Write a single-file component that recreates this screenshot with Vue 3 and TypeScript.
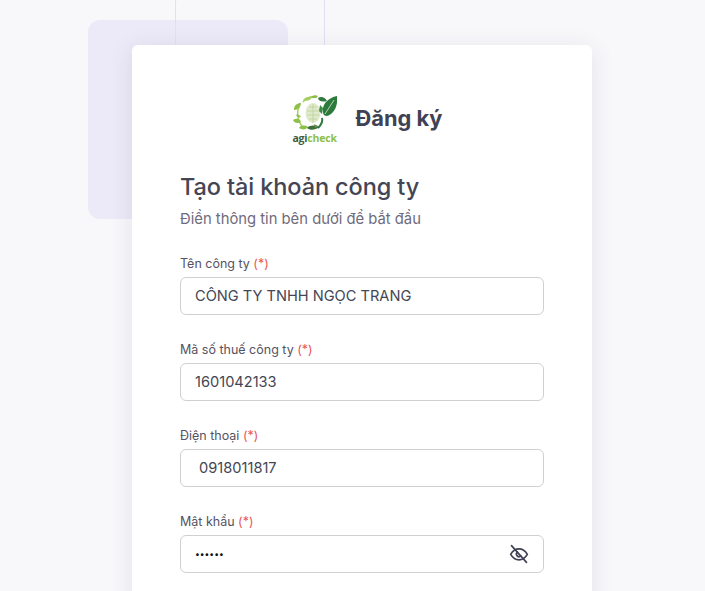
<script setup lang="ts">
interface Field { label: string; value: string; type?: string }
const fields: Field[] = [
  { label: 'Tên công ty', value: 'CÔNG TY TNHH NGỌC TRANG' },
  { label: 'Mã số thuế công ty', value: '1601042133' },
  { label: 'Điện thoại', value: ' 0918011817' },
  { label: 'Mật khẩu', value: '123456', type: 'password' },
]
</script>

<template>
  <div class="page">
    <div class="deco-square"></div>
    <div class="deco-lines"></div>
    <main class="card">
      <header class="brand">
        <div class="logo">
          <svg class="logo-art" width="44" height="38" viewBox="0 0 44 38">
            <ellipse cx="20" cy="18" rx="7.500" ry="10" fill="#dfe9cb" />
            <path d="M16 12h8M14 16h12M14 20h12M16 24h8M20 9v19" stroke="#bcd29b" stroke-width=".8" fill="none" />
            <path d="M10 7C13 3 18 1 24 2" stroke="#a5cf5c" stroke-width="1.500" fill="none" />
            <path d="M6 12C3 19 5 28 11 33" stroke="#a5cf5c" stroke-width="1.400" fill="none" />
            <path d="M1 15c0-5 3-7 7-7 0 4-3 7-7 7zM0 25c3-2 7-2 8 2-3 2-7 1-8-2zM6 33c2-3 6-3 9-1-2 3-6 3-9 1zM3 20c2-1 4 0 5 2-2 1-4 0-5-2z" fill="#8fc04a" />
            <path d="M10 5c2-3 6-4 9-3-1 3-5 5-9 3z" fill="#a5cf5c" />
            <path d="M18 2c2-2 5-2 7-1-1 2-5 3-7 1z" fill="#8cbc46" />
            <path d="M25 3c3-2 7-1 9 3-4 1-8 1-9-3z" fill="#2e7a3f" />
            <path d="M30 17C29 9 35 3 44 1c1 9-2 17-10 20-2 0-4-1-4-4z" fill="#2c7a3c" />
            <path d="M32 19L41 5" stroke="#d9ead3" stroke-width=".8" />
            <path d="M27 10l3 3-1 6-3-3z" fill="#3c8a48" />
            <path d="M29 23c1 3-1 7-4 10" stroke="#2e7a3f" stroke-width="2" fill="none" />
            <path d="M14 33c3-3 8-3 12-1-3 3-9 4-12 1z" fill="#3c6e3a" />
            <path d="M21 29l4 2-3 2z" fill="#6c8d5a" />
          </svg>
          <div class="logo-word"><span class="agi">agi</span><span class="check">check</span></div>
        </div>
        <span class="brand-title">Đăng ký</span>
      </header>

      <h1 class="title">Tạo tài khoản công ty</h1>
      <p class="subtitle">Điền thông tin bên dưới để bắt đầu</p>

      <form class="form" @submit.prevent>
        <div v-for="f in fields" :key="f.label" class="field">
          <label class="label">{{ f.label }} <span class="req">(*)</span></label>
          <div class="input-wrap">
            <input class="input" :class="{ pass: f.type === 'password' }" :type="f.type ?? 'text'" :value="f.value" />
            <svg v-if="f.type === 'password'" class="eye" width="20" height="20" viewBox="0 0 24 24" fill="none" stroke="#3f4254" stroke-width="2" stroke-linecap="round" stroke-linejoin="round">
              <path d="M2 12.500c2.600-4.400 6-6.600 10-6.600s7.400 2.200 10 6.600c-2.600 4.400-6 6.600-10 6.600S4.600 16.900 2 12.500z" />
              <path d="M10 9.800a3 3 0 0 0 4.200 4.600" />
              <path d="M3 2l18 20" />
            </svg>
          </div>
        </div>
      </form>
    </main>
  </div>
</template>

<style>
html, body { margin: 0; height: 100%; overflow: hidden; background: #f8f8fb; }
</style>

<style scoped>
.page {
  position: relative;
  height: 591px;
  overflow: hidden;
  background: #f8f8fb;
  font-family: Inter, "Noto Sans", sans-serif;
  color: #444654;
}
.deco-square {
  position: absolute;
  left: 88px;
  top: 20px;
  width: 200px;
  height: 199px;
  border-radius: 12px;
  background: #eceaf8;
}
.deco-lines {
  position: absolute;
  left: 175px;
  top: -8px;
  width: 150px;
  height: 200px;
  box-sizing: border-box;
  border: 1px solid #e1dff5;
  border-radius: 10px;
}
.card {
  position: relative;
  box-sizing: border-box;
  width: 460px;
  margin: 45px 0 0 132px;
  padding: 50px 48px 48px;
  height: 700px;
  background: #fff;
  border-radius: 6px;
  box-shadow: 0 4px 24px rgba(47, 43, 61, 0.1);
}
.brand {
  display: flex;
  align-items: center;
  justify-content: center;
  gap: 19px;
  height: 48px;
  padding-left: 11px;
}
.logo {
  display: flex;
  flex-direction: column;
  align-items: center;
  width: 44px;
}
.logo-art { display: block; }
.logo-word {
  font-family: "Open Sans", sans-serif;
  font-size: 10.500px;
  line-height: 10px;
  font-weight: 700;
  letter-spacing: -0.2px;
  white-space: nowrap;
}
.agi { color: #3f5a3c; }
.check { color: #8dc04a; }
.brand-title {
  font-family: Inter, sans-serif;
  font-size: 21.800px;
  font-weight: 700;
  color: #3f4254;
  line-height: 32px;
  margin-top: -2px;
}
.title {
  margin: 27px 0 0;
  font-size: 23.500px;
  line-height: 34px;
  font-weight: 500;
  letter-spacing: -0.1px;
  color: #444654;
}
.subtitle {
  margin: 4px 0 0;
  font-size: 14.800px;
  line-height: 22px;
  color: #6f6b7d;
}
.form {
  display: flex;
  flex-direction: column;
  gap: 25px;
  margin-top: 24px;
}
.field {
  display: flex;
  flex-direction: column;
  gap: 3px;
}
.label {
  font-size: 12.500px;
  line-height: 20px;
  color: #55535f;
}
.req { color: #ea5455; }
.input-wrap { position: relative; }
.input {
  display: block;
  box-sizing: border-box;
  width: 100%;
  height: 38px;
  padding: 0 14px;
  border: 1px solid #d0d0d4;
  border-radius: 6px;
  background: #fff;
  font-family: inherit;
  font-size: 14.600px;
  color: #444654;
  outline: none;
}
.pass { color: #111; padding-right: 46px; font-size: 8.500px; letter-spacing: 0; }
.eye {
  position: absolute;
  right: 15px;
  top: 9px;
}
</style>
